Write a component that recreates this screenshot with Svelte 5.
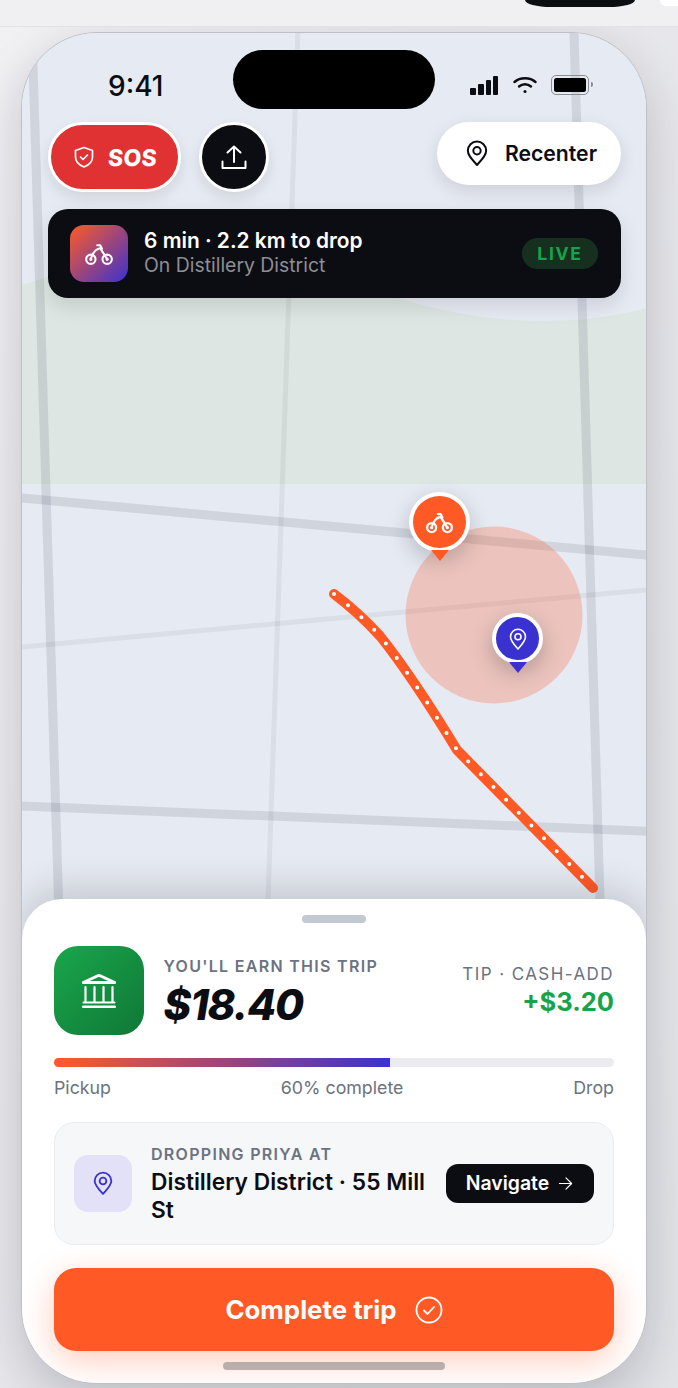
<script>
  const roads = [
    { d: 'M31 0L58.500 900', w: 9, o: 0.11 },
    { d: 'M299 0L268 900', w: 5, o: 0.06 },
    { d: 'M573 0L600 900', w: 9, o: 0.11 },
    { d: 'M0 496L678 558', w: 9, o: 0.11 },
    { d: 'M0 649L678 587', w: 5, o: 0.06 },
    { d: 'M0 805L678 832.500', w: 9, o: 0.11 }
  ];
  const route = 'M334 594Q358 612 380 636Q412 676 457 750L593 888';
  const park = 'M22 285L48 277L100 262H380L398 298Q470 321 541 321Q600 321 646 308V484H22Z';
</script>

<div class="page">
  <div class="topbar">
    <span class="pill"></span>
    <span class="dot"></span>
  </div>
  <div class="phone">
    <svg class="map" viewBox="22 32 624 1351" width="624" height="1351" aria-hidden="true">
      <rect x="22" y="32" width="624" height="1351" fill="#e6eaf2" />
      <path d={park} fill="#dde6e2" />
      {#each roads as r}
        <path d={r.d} stroke="#1c2233" stroke-width={r.w} stroke-opacity={r.o} fill="none" />
      {/each}
      <circle cx="494" cy="615" r="88.500" fill="#ff5a26" fill-opacity="0.26" />
      <path d={route} stroke="#ff5a26" stroke-width="10" stroke-linecap="round" stroke-linejoin="round" fill="none" />
      <path d={route} stroke="#fff" stroke-width="4" stroke-linecap="round" stroke-dasharray="0 18" fill="none" />
    </svg>

    <div class="rider marker">
      <span class="disc">
        <svg viewBox="0 0 24 24" width="27" height="27" fill="none" stroke="#fff" stroke-width="2" stroke-linecap="round" stroke-linejoin="round">
          <circle cx="5" cy="16.500" r="4" /><circle cx="19" cy="16.500" r="4" />
          <circle cx="5" cy="16.500" r="0.500" /><circle cx="19" cy="16.500" r="0.500" />
          <path d="M5 16.500C6.500 11 9.500 7.500 13 7L19 16.500" /><path d="M10.500 4.500h2.500l1.500 3" />
        </svg>
      </span>
      <i class="tip"></i>
    </div>
    <div class="drop marker">
      <span class="disc">
        <svg viewBox="0 0 24 24" width="24" height="24" fill="none" stroke="#fff" stroke-width="1.600" stroke-linejoin="round">
          <path d="M12 22C8 17.500 4.500 14 4.500 9.800a7.500 7.500 0 0 1 15 0C19.500 14 16 17.500 12 22Z" /><circle cx="12" cy="9.800" r="3" />
        </svg>
      </span>
      <i class="tip"></i>
    </div>

    <div class="status">
      <span class="time">9:41</span>
      <span class="island"></span>
      <span class="sys">
        <svg width="29" height="19" viewBox="0 0 29 19" fill="#0c0d12">
          <rect x="0" y="12" width="6" height="7" rx="1" /><rect x="8" y="8" width="6" height="11" rx="1" /><rect x="16" y="4" width="5" height="15" rx="1" /><rect x="23" y="0" width="5" height="19" rx="1" />
        </svg>
        <svg width="24" height="18" viewBox="0 0 24 18" fill="none" stroke="#0c0d12" stroke-width="2.400" stroke-linecap="round">
          <path d="M1.500 6C7 1 17 1 22.500 6" /><path d="M6 10.500c3.500-3 8.500-3 12 0" /><circle cx="12" cy="15.500" r="1.500" fill="#0c0d12" stroke="none" />
        </svg>
        <span class="batt"><b></b></span>
      </span>
    </div>

    <div class="controls">
      <button class="sos">
        <svg viewBox="0 0 24 24" width="24" height="26" fill="none" stroke="#fff" stroke-width="1.700" stroke-linecap="round" stroke-linejoin="round">
          <path d="M12 2.500L20.500 5.500V12C20.500 17 17 20 12 22C7 20 3.500 17 3.500 12V5.500Z" /><path d="M8.500 12l2.500 2.500 4.500-4.500" />
        </svg>
        <span class="sostext">SOS</span>
      </button>
      <button class="share">
        <svg viewBox="0 0 26 26" width="26" height="26" fill="none" stroke="#fff" stroke-width="2" stroke-linecap="round" stroke-linejoin="round">
          <path d="M13 18V2.500M6.500 8.500L13 2.500l6.500 6" /><path d="M1.500 17.500V24h23v-6.500" />
        </svg>
      </button>
      <button class="recenter">
        <svg viewBox="0 0 24 28" width="22" height="27" fill="none" stroke="#0c0d12" stroke-width="2.200" stroke-linejoin="round">
          <path d="M12 26.500C6.500 20.500 2 16 2 11a10 10 0 0 1 20 0C22 16 17.500 20.500 12 26.500Z" /><circle cx="12" cy="11" r="4" />
        </svg>
        <span class="rectext">Recenter</span>
      </button>
    </div>

    <div class="live">
      <span class="grad">
        <svg viewBox="0 0 24 24" width="28" height="28" fill="none" stroke="#fff" stroke-width="1.800" stroke-linecap="round" stroke-linejoin="round">
          <circle cx="5" cy="16.500" r="4" /><circle cx="19" cy="16.500" r="4" />
          <circle cx="5" cy="16.500" r="0.500" /><circle cx="19" cy="16.500" r="0.500" />
          <path d="M5 16.500C6.500 11 9.500 7.500 13 7L19 16.500" /><path d="M10.500 4.500h2.500l1.500 3" />
        </svg>
      </span>
      <span class="livetext">
        <strong>6 min · 2.2 km to drop</strong>
        <small>On Distillery District</small>
      </span>
      <span class="badge">LIVE</span>
    </div>

    <div class="spacer"></div>

    <div class="sheet">
      <span class="handle"></span>
      <div class="earn">
        <span class="bank">
          <svg viewBox="0 0 34 34" width="34" height="34" fill="none" stroke="#fff" stroke-width="2.200" stroke-linecap="round" stroke-linejoin="round">
            <path d="M1.200 8.500L17 1.200 32.800 8.500Z" stroke-width="2.800" /><path d="M3.500 13v15M12.500 13v15M21.500 13v15M30.500 13v15" /><path d="M1.500 28.500h31" stroke-width="2" /><path d="M1.200 32.700h31.600" stroke-width="2.600" />
          </svg>
        </span>
        <div class="amount">
          <span class="eyebrow">YOU'LL EARN THIS TRIP</span>
          <strong>$18.40</strong>
        </div>
        <div class="tipbox">
          <span>TIP · CASH-ADD</span>
          <strong>+$3.20</strong>
        </div>
      </div>
      <div class="track"><div class="fill" style="width:60%"></div></div>
      <div class="legend"><span>Pickup</span><span>60% complete</span><span>Drop</span></div>

      <div class="dest">
        <span class="pinbox">
          <svg viewBox="0 0 24 28" width="20" height="25" fill="none" stroke="#3a32d0" stroke-width="2.200" stroke-linejoin="round">
            <path d="M12 26.500C6.500 20.500 2 16 2 11a10 10 0 0 1 20 0C22 16 17.500 20.500 12 26.500Z" /><circle cx="12" cy="11" r="4" />
          </svg>
        </span>
        <div class="desttext">
          <span>DROPPING PRIYA AT</span>
          <strong>Distillery District · 55 Mill St</strong>
        </div>
        <button class="nav">
          <span class="navtext">Navigate</span>
          <svg viewBox="0 0 16 16" width="15" height="15" fill="none" stroke="#fff" stroke-width="1.300" stroke-linecap="round" stroke-linejoin="round"><path d="M1.500 8h13M8.500 2l6 6-6 6" /></svg>
        </button>
      </div>

      <button class="complete">
        Complete trip
        <svg viewBox="0 0 28 28" width="28" height="28" fill="none" stroke="#fff" stroke-width="1.800" stroke-linecap="round" stroke-linejoin="round"><circle cx="14" cy="14" r="12.500" /><path d="M9 14.500l3.500 3.500 6.500-7" /></svg>
      </button>
      <span class="home"></span>
    </div>
  </div>
</div>

<style>
  :global(body) { margin: 0; }
  * { box-sizing: border-box; }
  .page {
    position: relative;
    width: 678px; height: 1388px; overflow: hidden;
    display: flex; flex-direction: column;
    background: linear-gradient(115deg, #f1f1f4 0%, #e8e8ec 40%, #e2e3e7 100%);
    font-family: Inter, "Liberation Sans", sans-serif;
    color: #0c0d12;
  }
  .topbar {
    position: relative; z-index: 1;
    height: 27px; flex: none; background: #f0eff2; border-bottom: 1px solid #e2e2e6;
    display: flex; align-items: flex-start; justify-content: flex-end; gap: 25px;
  }
  .pill { width: 110px; height: 7px; background: #0c0d12; border-radius: 0 0 26px 26px / 0 0 7px 7px; }
  .dot { width: 18px; height: 6px; background: #fff; border-radius: 0 0 0 12px; }
  .phone {
    position: relative; flex: none; overflow: hidden;
    width: 626px; height: 1352px; margin: 5px 0 0 21px;
    border: 1px solid #bfc0c5; border-radius: 76px;
    display: flex; flex-direction: column;
    background: #e6eaf2;
  }
  .page::before {
    content: ''; position: absolute; left: 22px; top: 32px; width: 624px; height: 1351px;
    border-radius: 76px; box-shadow: 0 18px 50px rgba(15, 17, 30, 0.2);
  }
  .map { position: absolute; left: 0; top: -1px; display: block; }
  .status {
    position: relative; height: 59px; margin-top: 17px; flex: none;
    display: flex; align-items: center; justify-content: space-between; padding: 0 57px 0 86px;
  }
  .time { font-size: 28px; font-weight: 500; line-height: 1; margin-top: 12px; }
  .island { position: absolute; left: 211px; top: 0; width: 202px; height: 59px; border-radius: 30px; background: #000; }
  .sys { display: flex; align-items: center; gap: 14px; margin-top: 11px; }
  .batt {
    position: relative; width: 38px; height: 20px; border: 1.500px solid #8c8d92; border-radius: 5px; padding: 2px; display: block;
  }
  .batt::after { content: ''; position: absolute; right: -5px; top: 6px; width: 2px; height: 5px; background: #8c8d92; border-radius: 0 2px 2px 0; }
  .batt b { display: block; width: 100%; height: 100%; background: #000; border-radius: 2.500px; }
  .controls {
    position: relative; flex: none; margin-top: 13px; padding: 0 25px 0 26px; height: 70px;
    display: flex; align-items: flex-start; gap: 18px;
  }
  button { font-family: inherit; border: 0; padding: 0; display: flex; align-items: center; justify-content: center; }
  .sos {
    width: 133px; height: 70px; border-radius: 35px; background: #e03232; border: 3px solid #fff; color: #fff;
    font-size: 23px; font-weight: 800; gap: 12px; box-shadow: 0 6px 14px rgba(15, 17, 30, 0.1);
  }
  .sostext { display: block; transform: skewX(-4deg); letter-spacing: 0.300px; margin-top: 2px; }
  .share {
    width: 70px; height: 70px; border-radius: 50%; background: #0c0d12; border: 3px solid #fff; box-shadow: 0 6px 14px rgba(15, 17, 30, 0.1);
  }
  .recenter {
    margin-left: auto; width: 184px; height: 63px; border-radius: 32px; background: #fff; color: #0c0d12;
    font-size: 21.200px; font-weight: 600; gap: 17px; padding-left: 5px; box-shadow: 0 6px 18px rgba(15, 17, 30, 0.12);
  }
  .rectext { margin-top: -2px; }
  .live {
    position: relative; flex: none; margin: 17px 25px 0 26px; height: 89px; border-radius: 20px; background: #0c0d12;
    display: flex; align-items: center; padding: 0 23px 0 22px; box-shadow: 0 8px 20px rgba(15, 17, 30, 0.12);
  }
  .grad {
    width: 58px; height: 57px; border-radius: 14px; flex: none; display: flex; align-items: center; justify-content: center;
    background: linear-gradient(135deg, #ff5a26, #3a32d0);
  }
  .livetext { display: flex; flex-direction: column; margin: -2px 0 0 16px; flex: 1; }
  .livetext strong { font-size: 20.900px; font-weight: 600; color: #fff; line-height: 25px; }
  .livetext small { font-size: 19.400px; font-weight: 400; color: #8e8e95; line-height: 24px; }
  .badge {
    width: 76px; height: 31px; border-radius: 16px; background: #15301f; color: #16a34a;
    font-size: 17.500px; font-weight: 700; letter-spacing: 1.700px; display: flex; align-items: center; justify-content: center;
  }
  .spacer { flex: 1; }
  .marker { position: absolute; display: flex; flex-direction: column; align-items: center; }
  .disc { display: flex; align-items: center; justify-content: center; border-radius: 50%; border: 4px solid #fff; }
  .rider { left: 387px; top: 459px; }
  .rider .disc { width: 61px; height: 60px; background: #ff5a26; box-shadow: 0 8px 22px rgba(15, 17, 30, 0.22); }
  .drop { left: 470px; top: 580px; }
  .drop .disc { width: 51px; height: 51px; background: #3a32d0; box-shadow: 0 8px 22px rgba(15, 17, 30, 0.25); }
  .tip { display: block; width: 0; height: 0; border: 9px solid transparent; border-bottom: 0; border-top: 11px solid; margin-top: -2px; }
  .rider .tip { border-top-color: #ff5a26; }
  .drop .tip { border-top-color: #3a32d0; }
  .sheet {
    position: relative; flex: none; height: 484px; background: #fff; border-radius: 40px 40px 0 0;
    padding: 47px 32px 0; display: flex; flex-direction: column;
    box-shadow: 0 -10px 36px rgba(15, 17, 30, 0.16);
  }
  .handle { position: absolute; left: 280px; top: 16px; width: 64px; height: 8px; border-radius: 4px; background: #c3c9d3; }
  .earn { display: flex; align-items: center; height: 89px; }
  .bank {
    width: 90px; height: 89px; border-radius: 24px; flex: none; display: flex; align-items: center; justify-content: center;
    background: linear-gradient(135deg, #1aa64c, #0f7836);
  }
  .amount { display: flex; flex-direction: column; margin: 4px 0 0 19.500px; flex: 1; }
  .eyebrow { font-size: 16px; font-weight: 600; letter-spacing: 1.300px; color: #6b7280; line-height: 20px; margin-top: 1px; }
  .amount strong { font-size: 42px; font-weight: 800; font-style: italic; line-height: 52px; letter-spacing: -1.100px; margin-top: 3px; }
  .tipbox { display: flex; flex-direction: column; align-items: flex-end; margin-top: -2px; }
  .tipbox span { font-size: 17px; letter-spacing: 1.430px; color: #6b7280; line-height: 24px; }
  .tipbox strong { font-size: 25.500px; font-weight: 700; color: #16a34a; line-height: 32px; }
  .track { height: 9px; margin-top: 23px; border-radius: 5px; background: #ebebf0; overflow: hidden; }
  .fill { height: 100%; background: linear-gradient(90deg, #ff5a26, #3a32d0); }
  .legend { display: flex; justify-content: space-between; margin-top: 10px; font-size: 17.800px; line-height: 22px; color: #6b7280; }
  .dest {
    margin-top: 23px; height: 123px; border-radius: 20px; background: #f6f7f9; border: 1px solid #eaecf0;
    display: flex; align-items: center; padding: 0 19px;
  }
  .pinbox { width: 58px; height: 57px; border-radius: 14px; background: #e2e1f8; flex: none; display: flex; align-items: center; justify-content: center; }
  .desttext { display: flex; flex-direction: column; margin: 0 20px 0 19px; flex: 1; }
  .desttext span { font-size: 16px; font-weight: 600; letter-spacing: 1.300px; color: #6b7280; line-height: 20px; }
  .desttext strong { font-size: 22.750px; font-weight: 600; line-height: 28px; margin-top: 4px; }
  .nav { width: 148px; height: 39px; flex: none; border-radius: 12px; background: #0c0d12; color: #fff; font-size: 19.400px; font-weight: 600; gap: 9px; padding-right: 1px; }
  .navtext { margin-top: -1px; }
  .complete {
    margin-top: 23px; height: 83px; border-radius: 22px; background: #ff5a26; color: #fff; flex: none;
    font-size: 25.800px; font-weight: 700; gap: 18px; box-shadow: 0 10px 34px rgba(255, 90, 38, 0.3);
  }
  .home { position: absolute; left: 201px; bottom: 13px; width: 222px; height: 8px; border-radius: 4px; background: rgba(12, 13, 18, 0.28); }
</style>
